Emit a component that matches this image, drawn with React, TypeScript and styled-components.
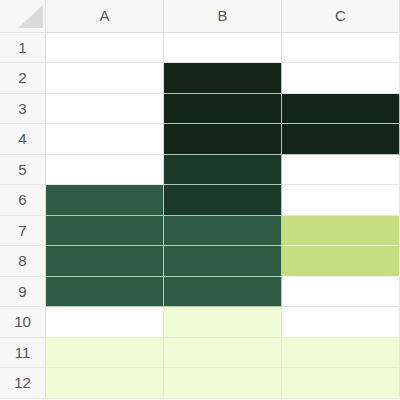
import React from "react";
import styled, { createGlobalStyle } from "styled-components";

const Global = createGlobalStyle`
  html, body { margin: 0; padding: 0; background: #ffffff; }
  body { font-family: "Liberation Sans", Arial, sans-serif; }
`;

type Fill = "none" | "d0" | "d1" | "m" | "l" | "p";

const FILLS: Record<Fill, { bg: string; line: string }> = {
  none: { bg: "#ffffff", line: "#e6e6e6" },
  d0: { bg: "#13241a", line: "#a9cbb2" },
  d1: { bg: "#1c3a29", line: "#a9cbb2" },
  m: { bg: "#2f5c45", line: "#a9d0b3" },
  l: { bg: "#c3dd80", line: "#eef3e2" },
  p: { bg: "#f0fcd4", line: "#e4ecd2" },
};

const Sheet = styled.div`
  width: 400px;
  height: 400px;
  overflow: hidden;
  display: grid;
  grid-template-columns: 46px repeat(3, 1fr);
  grid-template-rows: 32.5px repeat(12, 30.5px);
`;

const Corner = styled.div`
  position: relative;
  background: #f7f7f7;
  border-right: 1px solid #e0e0e0;
  border-bottom: 1px solid #e0e0e0;
  box-sizing: border-box;
`;

const Triangle = styled.div`
  position: absolute;
  left: 18px;
  top: 5px;
  width: 25px;
  height: 23px;
  background: #d9d9d9;
  clip-path: polygon(100% 0, 100% 100%, 0 100%);
`;

const ColHeader = styled.div`
  background: #f7f7f7;
  border-right: 1px solid #e0e0e0;
  border-bottom: 1px solid #e0e0e0;
  box-sizing: border-box;
  display: flex;
  align-items: center;
  justify-content: center;
  color: #555555;
  font-size: 15px;
`;

const RowHeader = styled.div`
  background: #f7f7f7;
  border-right: 1px solid #e0e0e0;
  border-bottom: 1px solid #e6e6e6;
  box-sizing: border-box;
  display: flex;
  align-items: center;
  justify-content: center;
  color: #555555;
  font-size: 15px;
`;

const Cell = styled.div<{ $fill: Fill }>`
  background: ${(p) => FILLS[p.$fill].bg};
  border-right: 1px solid ${(p) => FILLS[p.$fill].line};
  border-bottom: 1px solid ${(p) => FILLS[p.$fill].line};
  box-sizing: border-box;
`;

const DATA: Fill[][] = [
  ["none", "none", "none"],
  ["none", "d0", "none"],
  ["none", "d0", "d0"],
  ["none", "d0", "d0"],
  ["none", "d1", "none"],
  ["m", "d1", "none"],
  ["m", "m", "l"],
  ["m", "m", "l"],
  ["m", "m", "none"],
  ["none", "p", "none"],
  ["p", "p", "p"],
  ["p", "p", "p"],
];

export default function App() {
  return (
    <>
      <Global />
      <Sheet>
        <Corner>
          <Triangle />
        </Corner>
        {["A", "B", "C"].map((c) => (
          <ColHeader key={c}>{c}</ColHeader>
        ))}
        {DATA.map((row, i) => (
          <React.Fragment key={i}>
            <RowHeader>{i + 1}</RowHeader>
            {row.map((f, j) => (
              <Cell key={j} $fill={f} />
            ))}
          </React.Fragment>
        ))}
      </Sheet>
    </>
  );
}
